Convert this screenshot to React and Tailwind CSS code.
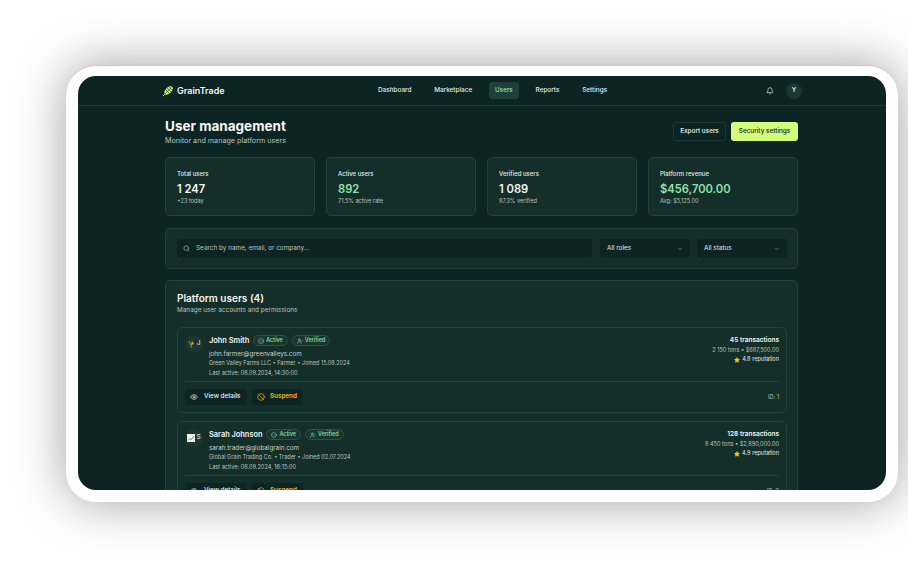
import React from 'react';
import { Bell, Search, ChevronDown, CircleCheck, UserCheck, Eye, Ban, Star } from 'lucide-react';

const stats = [
  { label: 'Total users', value: '1 247', note: '+23 today' },
  { label: 'Active users', value: '892', note: '71.5% active rate', green: true },
  { label: 'Verified users', value: '1 089', note: '87.3% verified' },
  { label: 'Platform revenue', value: '$456,700.00', note: 'Avg: $5,125.00', green: true },
];

const users = [
  {
    name: 'John Smith', initial: 'J', mark: 'wheat', email: 'john.farmer@greenvalleys.com',
    company: 'Green Valley Farms LLC • Farmer • Joined 15.08.2024', last: 'Last active: 08.09.2024, 14:30:00',
    tx: '45 transactions', volume: '2 150 tons • $687,500.00', rep: '4.8 reputation', id: 'ID: 1',
  },
  {
    name: 'Sarah Johnson', initial: 'S', mark: 'chart', email: 'sarah.trader@globalgrain.com',
    company: 'Global Grain Trading Co. • Trader • Joined 02.07.2024', last: 'Last active: 08.09.2024, 16:15:00',
    tx: '128 transactions', volume: '8 450 tons • $2,890,000.00', rep: '4.9 reputation', id: 'ID: 2',
  },
];

const Logo = () => (
  <svg width="12" height="12" viewBox="0 0 12 12" fill="none">
    <ellipse cx="6.6" cy="5.4" rx="5.2" ry="3" transform="rotate(-45 6.6 5.4)" fill="#c8f56a" />
    <path d="M.8 11.2 L3 9" stroke="#c8f56a" strokeWidth="1" />
    <path d="M3.4 4.4 L7.6 8.6 M5 2.8 L9.2 7 M6.8 1.6 L10.4 5.2 M3 8.8 L9.4 2.4" stroke="#0c2423" strokeWidth=".6" />
  </svg>
);

const Mark = ({ type }) =>
  type === 'wheat' ? (
    <svg width="8" height="9" viewBox="0 0 8 9" fill="none">
      <path d="M1 1 L4 8" stroke="#8a7a35" strokeWidth="1.2" />
      <path d="M4 1 L6 4 L3 5 Z" fill="#e0b030" />
    </svg>
  ) : (
    <svg width="8" height="8" viewBox="0 0 8 8" fill="none">
      <rect width="8" height="8" fill="#eef0ee" />
      <path d="M1 6.5 L3 4.5 L4.5 5.5 L7 2" stroke="#7a8a50" strokeWidth="1" />
    </svg>
  );

const UserRow = ({ u }) => (
  <div className="rounded-[6px] border border-[#24423a] bg-[#142e2a] px-[7px] pt-[7px] pb-[7px]">
    <div className="flex justify-between">
      <div className="flex gap-[6px]">
        <div className="w-[18px] h-[18px] rounded-full bg-[#1c3630] flex items-center justify-center gap-[1px] text-[6.5px] text-white shrink-0">
          <Mark type={u.mark} />
          <span>{u.initial}</span>
        </div>
        <div>
          <div className="flex items-center gap-[4px] h-[11px]">
            <span className="text-[7.4px] font-semibold text-[#f2f5f1]">{u.name}</span>
            <span className="flex items-center gap-[2px] h-[11px] px-[4px] rounded-full border border-[#2f5045] bg-[#1a3530] text-[5.5px] font-medium text-[#8fe3ac]">
              <CircleCheck size={6} />Active
            </span>
            <span className="flex items-center gap-[2px] h-[11px] px-[4px] rounded-full border border-[#2f5045] bg-[#1a3530] text-[5.5px] font-medium text-[#8fe3ac]">
              <UserCheck size={6} />Verified
            </span>
          </div>
          <div className="text-[6.3px] text-[#c9d3cc] mt-[4px] leading-[9px]">{u.email}</div>
          <div className="text-[5.5px] text-[#b8c4bd] leading-[9px]">{u.company}</div>
          <div className="text-[5.6px] text-[#b8c4bd] mt-[1px] leading-[9px]">{u.last}</div>
        </div>
      </div>
      <div className="text-right">
        <div className="text-[6.5px] font-semibold text-[#f2f5f1] leading-[11px]">{u.tx}</div>
        <div className="text-[5.6px] text-[#b8c4bd] leading-[9px]">{u.volume}</div>
        <div className="flex justify-end items-center gap-[2px] text-[5.6px] text-[#e4e9e5] leading-[9px]">
          <Star size={6} className="text-[#f5c518] fill-[#f5c518]" />{u.rep}
        </div>
      </div>
    </div>
    <div className="border-t border-[#24423a] mt-[3px] pt-[7px] flex items-center justify-between">
      <div className="flex gap-[5px]">
        <button className="h-[16px] w-[62px] pl-[5px] rounded-[3px] bg-[#0d2422] flex items-center gap-[6px] text-[6.3px] font-medium text-[#eef2ee]">
          <Eye size={8} />View details
        </button>
        <button className="h-[16px] w-[51px] pl-[5px] rounded-[3px] bg-[#0d2422] flex items-center gap-[5px] text-[6.3px] font-semibold text-[#f0b41e]">
          <Ban size={8} />Suspend
        </button>
      </div>
      <span className="text-[5.6px] text-[#b8c4bd]">{u.id}</span>
    </div>
  </div>
);

export default function App() {
  return (
    <div className="w-[908px] h-[567px] overflow-hidden bg-white pt-[65px] pl-[66px] font-['Inter',sans-serif]">
      <div className="w-[832px] h-[437px] rounded-[30px] bg-white p-[12px] pt-[10px] border-t border-[#c9c9c9] shadow-[0_0_50px_rgba(0,0,0,0.38)]">
        <div className="h-full rounded-[18px] overflow-hidden bg-[#0c2423] text-white">
          <header className="h-[30px] border-b border-[#1b3a33] flex items-center pl-[84px] pr-[84px]">
            <div className="flex items-center gap-[3px] w-[190px]">
              <Logo />
              <span className="text-[9px] font-semibold text-[#f4f6f2]">GrainTrade</span>
            </div>
            <nav className="flex items-center gap-[10.8px] text-[6.4px] font-medium text-[#e6ebe6] ml-[20px]">
              <span className="px-[6px]">Dashboard</span>
              <span className="px-[6px]">Marketplace</span>
              <span className="h-[17px] px-[6px] rounded-[3px] bg-[#1f3f39] text-[#8fe3ac] flex items-center">Users</span>
              <span className="px-[6px]">Reports</span>
              <span className="px-[6px]">Settings</span>
            </nav>
            <div className="ml-auto flex items-center gap-[12px]">
              <Bell size={8} className="text-[#eef2ee]" />
              <div className="w-[16px] h-[16px] rounded-full bg-[#1c3630] flex items-center justify-center text-[6.5px] font-medium">Y</div>
            </div>
          </header>

          <main className="pl-[87px] pr-[88px]">
            <div className="flex items-start justify-between pt-[11px]">
              <div>
                <h1 className="text-[13.5px] font-bold leading-[18px] text-[#f7f8f5]">User management</h1>
                <p className="text-[7.2px] leading-[10px] mt-[1px] text-[#b9c5bd]">Monitor and manage platform users</p>
              </div>
              <div className="flex gap-[5px] pt-[5px]">
                <button className="h-[19px] w-[53px] rounded-[3px] border border-[#1b3a33] bg-[#0c2422] text-[6.4px] font-medium text-[#f0f3ef]">Export users</button>
                <button className="h-[19px] w-[67px] rounded-[3px] bg-[#d4fb79] text-[6.4px] font-medium text-[#10261f]">Security settings</button>
              </div>
            </div>

            <div className="grid grid-cols-4 gap-[11px] mt-[11px]">
              {stats.map((s) => (
                <div key={s.label} className="h-[59px] rounded-[5px] border border-[#24423a] bg-[#142e2a] pl-[11px] pt-[11px]">
                  <div className="text-[6px] font-medium leading-[9px] text-[#e6ebe6]">{s.label}</div>
                  <div className={`text-[11.2px] font-semibold leading-[15px] mt-[4px] ${s.green ? 'text-[#8fe3ac]' : 'text-[#f5f7f3]'}`}>{s.value}</div>
                  <div className="text-[5.6px] leading-[8px] text-[#b8c4bd]">{s.note}</div>
                </div>
              ))}
            </div>

            <div className="h-[41px] mt-[12px] rounded-[5px] border border-[#24423a] bg-[#142e2a] flex items-center gap-[7px] pl-[11px] pr-[10px]">
              <div className="flex-1 mr-[1px] h-[19px] rounded-[3px] bg-[#0d2422] flex items-center gap-[6px] px-[6px] text-[6.4px] text-[#b9c5bd]">
                <Search size={7} />
                <span>Search by name, email, or company...</span>
              </div>
              <div className="w-[90px] h-[19px] rounded-[3px] bg-[#0d2422] flex items-center justify-between px-[7px] text-[6.4px] text-[#e6ebe6]">
                All roles<ChevronDown size={6} className="text-[#9fb0a6]" />
              </div>
              <div className="w-[90px] h-[19px] rounded-[3px] bg-[#0d2422] flex items-center justify-between px-[7px] text-[6.4px] text-[#e6ebe6]">
                All status<ChevronDown size={6} className="text-[#9fb0a6]" />
              </div>
            </div>

            <section className="mt-[11px] rounded-[5px] border border-[#24423a] bg-[#142e2a] pl-[11px] pr-[10px] pt-[10px]">
              <h2 className="text-[10px] font-semibold leading-[14px] text-[#f4f6f2]">Platform users (4)</h2>
              <p className="text-[6.4px] leading-[8px] text-[#b9c5bd] mt-[1px]">Manage user accounts and permissions</p>
              <div className="mt-[13px] flex flex-col gap-[8px]">
                {users.map((u) => (
                  <UserRow key={u.id} u={u} />
                ))}
              </div>
            </section>
          </main>
        </div>
      </div>
    </div>
  );
}
